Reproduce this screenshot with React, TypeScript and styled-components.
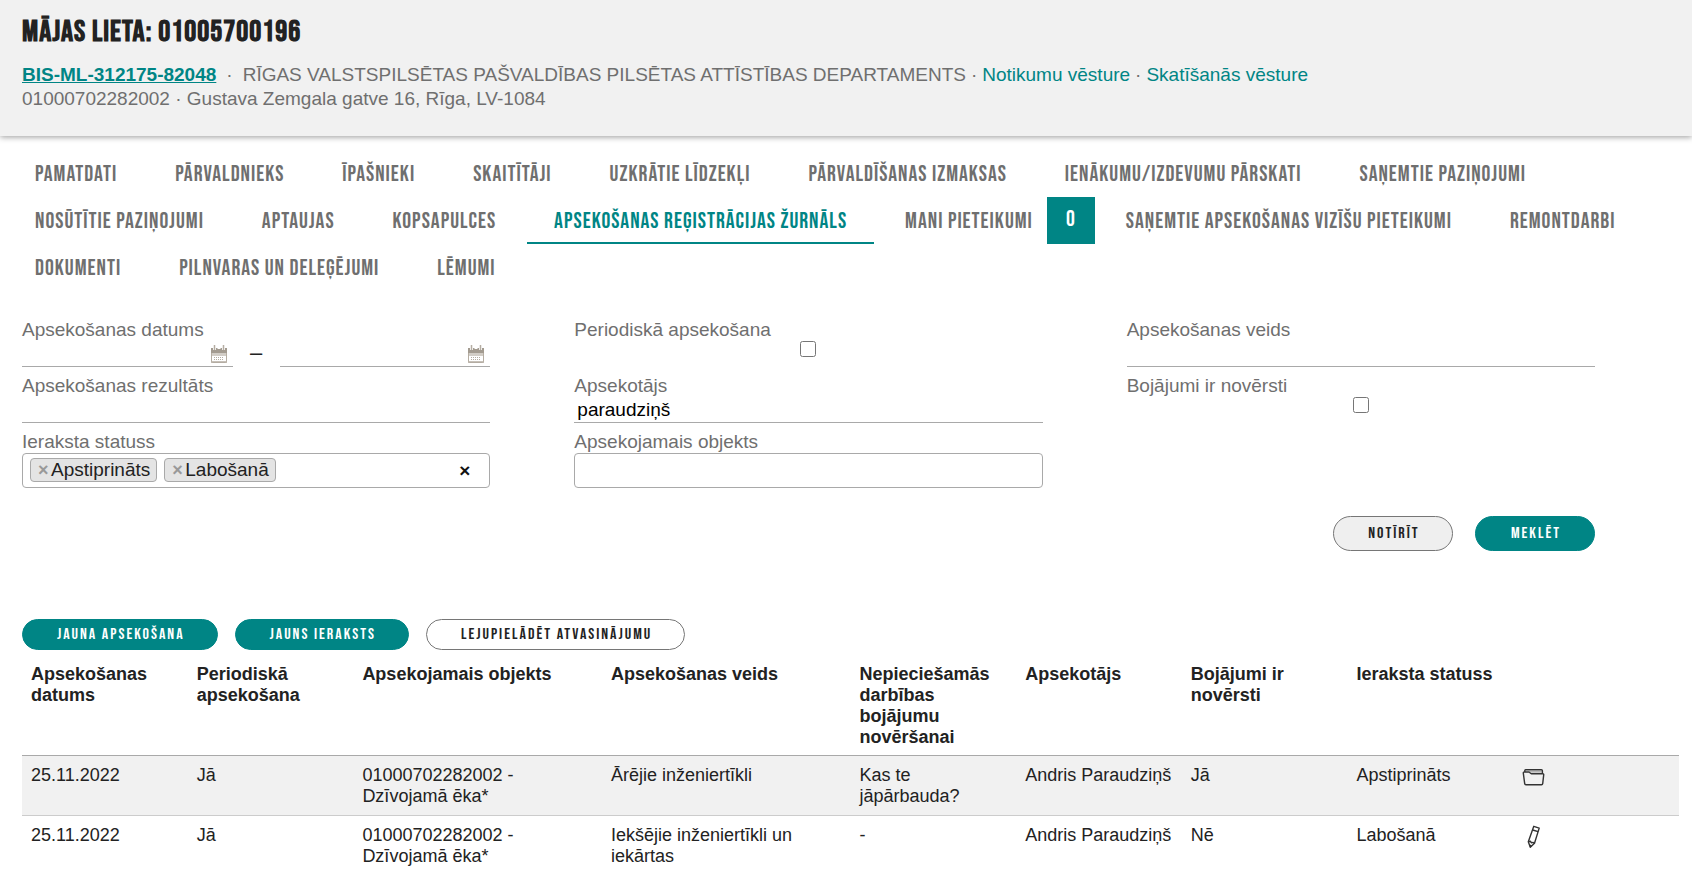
import React from "react";
import styled, { createGlobalStyle } from "styled-components";

const teal = "#008585";
const ink = "#222222";
const muted = "#6f6f6f";
const line = "#a9a9a9";
const condensed = '"Bebas Neue", "Open Sans Condensed", "Roboto Condensed", sans-serif';

const GlobalStyle = createGlobalStyle`
  *, *::before, *::after { box-sizing: border-box; }
  body {
    margin: 0;
    background: #fff;
    color: ${ink};
    font-family: "Liberation Sans", Arial, sans-serif;
    font-size: 18px;
    line-height: 21px;
  }
  input, button { font: inherit; color: inherit; }
`;

const Header = styled.header`
  padding: 16px 22px 25px;
  background: #f1f1f1;
  box-shadow: 0 1px 6px rgba(0, 0, 0, 0.4);
  color: ${muted};
  font-size: 19px;
  line-height: 24px;
`;

const Title = styled.h1`
  margin: 0 0 15px;
  color: ${ink};
  font-family: ${condensed};
  font-size: 30px;
  letter-spacing: 1px;
  line-height: 32px;
  font-weight: 700;
`;

const Meta = styled.p`
  margin: 0;
`;

const Dot = styled.span<{ $wide?: boolean }>`
  margin: 0 ${(p) => (p.$wide ? "10px" : "5px")};
`;

const HeaderLink = styled.a<{ $strong?: boolean }>`
  color: ${teal};
  font-weight: ${(p) => (p.$strong ? 700 : 400)};
  text-decoration: ${(p) => (p.$strong ? "underline" : "none")};
`;

const Tabs = styled.nav`
  display: flex;
  flex-wrap: wrap;
  column-gap: 4px;
  padding: 14px 8px 0;
`;

const Tab = styled.a<{ $active?: boolean; $badged?: boolean }>`
  display: flex;
  align-items: center;
  height: 47px;
  padding: 4px ${(p) => (p.$badged ? "0" : "27px")} 0 27px;
  border-bottom: 2px solid ${(p) => (p.$active ? teal : "transparent")};
  color: ${(p) => (p.$active ? teal : muted)};
  font-family: ${condensed};
  font-size: 22px;
  letter-spacing: 1px;
  text-transform: uppercase;
  text-decoration: none;
  white-space: nowrap;
`;

const Badge = styled.span`
  display: flex;
  align-items: center;
  justify-content: center;
  width: 48px;
  height: 47px;
  margin: -4px 0 -2px 14px;
  padding-bottom: 2px;
  background: ${teal};
  color: #fff;
`;

const SearchForm = styled.form`
  display: grid;
  grid-template-columns: repeat(3, minmax(0, 1fr));
  column-gap: 84px;
  padding: 26px 97px 0 22px;
`;

const Field = styled.div`
  display: flex;
  flex-direction: column;
  min-height: 56px;
`;

const Label = styled.label`
  height: 24px;
  color: ${muted};
  font-size: 19px;
  line-height: 26px;
`;

const LineInput = styled.input`
  width: 100%;
  height: 26px;
  padding: 0 3px;
  border: 0;
  border-bottom: 1px solid ${line};
  border-radius: 0;
  background: transparent;
  color: #000;
  font-size: 19px;
  outline: none;
`;

const CheckBox = styled.input`
  width: 16px;
  height: 16px;
  margin: 0;
  align-self: center;
`;

const DateRange = styled.div`
  display: grid;
  grid-template-columns: minmax(0, 1fr) 47px minmax(0, 1fr);
`;

const DateBox = styled.div`
  display: flex;
  align-items: center;
  padding-right: 6px;
  border-bottom: 1px solid ${line};
`;

const DateInput = styled.input`
  flex: 1;
  min-width: 0;
  height: 25px;
  padding: 0 3px;
  border: 0;
  background: transparent;
  outline: none;
`;

const IconButton = styled.button`
  display: flex;
  padding: 0;
  border: 0;
  background: none;
`;

const Dash = styled.span`
  font-size: 22px;
  line-height: 24px;
  text-align: center;
`;

const MultiBox = styled.div`
  display: flex;
  align-items: center;
  height: 35px;
  padding: 0 17px 0 7px;
  border: 1px solid ${line};
  border-radius: 4px;
`;

const Tag = styled.span`
  display: flex;
  align-items: center;
  height: 24px;
  margin: 0 7px 2px 0;
  padding: 0 6px 0 7px;
  border: 1px solid ${line};
  border-radius: 4px;
  background: #e4e4e4;
  font-size: 19px;
`;

const RemoveButton = styled.button<{ $dark?: boolean }>`
  width: 13px;
  padding: 0;
  border: 0;
  background: none;
  color: ${(p) => (p.$dark ? "#111" : "#999")};
  font-size: ${(p) => (p.$dark ? "19px" : "18px")};
  font-weight: 700;
  line-height: 16px;
  text-align: left;
`;

const MultiInput = styled.input`
  flex: 1;
  min-width: 0;
  border: 0;
  background: transparent;
  outline: none;
`;

const Submit = styled.div`
  grid-column: 1 / -1;
  display: flex;
  justify-content: flex-end;
  gap: 22px;
  padding-top: 28px;
`;

type Tone = "teal" | "grey" | "white";

const Pill = styled.button<{ $tone: Tone; $tall?: boolean }>`
  min-width: 120px;
  height: ${(p) => (p.$tall ? "35px" : "31px")};
  padding: 0 32px 0 34px;
  border: 1px solid ${(p) => (p.$tone === "teal" ? teal : "#767676")};
  border-radius: 18px;
  background: ${(p) => (p.$tone === "teal" ? teal : p.$tone === "grey" ? "#efefef" : "#fff")};
  color: ${(p) => (p.$tone === "teal" ? "#fff" : ink)};
  font-family: ${condensed};
  font-size: 16px;
  letter-spacing: 2px;
  text-transform: uppercase;
  white-space: nowrap;
`;

const Actions = styled.div`
  display: flex;
  gap: 17px;
  padding: 68px 22px 4px;
`;

const TableWrap = styled.div`
  padding: 0 13px 0 22px;
`;

const Table = styled.table`
  width: 100%;
  table-layout: fixed;
  border-collapse: collapse;
`;

const Column = styled.col<{ $share: number }>`
  width: ${(p) => p.$share}%;
`;

const HeadCell = styled.th`
  padding: 10px 9px 7px;
  border-bottom: 1px solid ${line};
  text-align: left;
  vertical-align: top;
`;

const Row = styled.tr`
  &:nth-child(odd) { background: #f1f1f1; }
  &:not(:last-child) td { border-bottom: 1px solid #cccccc; }
`;

const Cell = styled.td`
  padding: 9px 9px 8px;
  vertical-align: top;
`;

const tabs = [
  "Pamatdati", "Pārvaldnieks", "Īpašnieki", "Skaitītāji", "Uzkrātie līdzekļi",
  "Pārvaldīšanas izmaksas", "Ienākumu/izdevumu pārskati", "Saņemtie paziņojumi",
  "Nosūtītie paziņojumi", "Aptaujas", "Kopsapulces", "Apsekošanas reģistrācijas žurnāls",
  "Mani pieteikumi", "Saņemtie apsekošanas vizīšu pieteikumi", "Remontdarbi",
  "Dokumenti", "Pilnvaras un deleģējumi", "Lēmumi",
];

const columns = [
  { title: "Apsekošanas datums", share: 10 },
  { title: "Periodiskā apsekošana", share: 10 },
  { title: "Apsekojamais objekts", share: 15 },
  { title: "Apsekošanas veids", share: 15 },
  { title: "Nepieciešamās darbības bojājumu novēršanai", share: 10 },
  { title: "Apsekotājs", share: 10 },
  { title: "Bojājumi ir novērsti", share: 10 },
  { title: "Ieraksta statuss", share: 10 },
];

const rows = [
  {
    cells: ["25.11.2022", "Jā", "01000702282002 - Dzīvojamā ēka*", "Ārējie inženiertīkli", "Kas te jāpārbauda?", "Andris Paraudziņš", "Jā", "Apstiprināts"],
    action: "open",
  },
  {
    cells: ["25.11.2022", "Jā", "01000702282002 - Dzīvojamā ēka*", "Iekšējie inženiertīkli un iekārtas", "-", "Andris Paraudziņš", "Nē", "Labošanā"],
    action: "edit",
  },
];

const CalendarIcon = () => (
  <svg width="16" height="18" viewBox="0 0 16 18" aria-hidden="true">
    <rect x="0.5" y="3.5" width="15" height="14" rx="1" fill="#fff" stroke="#b5ada2" />
    <rect x="0" y="3" width="16" height="5" fill="#a39b90" />
    <rect x="1" y="8" width="14" height="3" fill="#d2cdc6" />
    <path d="M3.5 0v5M8 1v3M12.5 0v5" stroke="#fff" strokeWidth="3" />
    <path d="M3.5 0v5M12.5 0v5" stroke="#b5ada2" strokeWidth="1.5" />
    <path d="M3 12.5h10M3 14.5h10" stroke="#b5ada2" strokeDasharray="1 1" />
    <path d="M0 17h16" stroke="#b5ada2" strokeWidth="1.5" />
  </svg>
);

const FolderIcon = () => (
  <svg width="24" height="22" viewBox="0 0 24 22" fill="none" stroke="#333" strokeWidth="1.4" strokeLinejoin="round" aria-hidden="true">
    <path d="M1.3 8.2C1.2 7.4 1.7 7 2.4 7h4.4c1.3 0 1.3 1.7 2.6 1.7h11.3c.7 0 1.1.4 1 1.1l-1 8.9c-.1.7-.5 1-1.2 1H3.9c-.7 0-1.100-.3-1.200-1z" />
    <path d="M2.800 7V5.600c0-.5.3-.8.8-.8h15.800c.6 0 1 .3 1 .9v2.900" />
    <path d="M7.5 6.900h12.500" stroke="#777" strokeWidth="0.8" />
  </svg>
);

const PencilIcon = () => (
  <svg width="22" height="24" viewBox="0 0 22 24" fill="none" stroke="#333" strokeWidth="1.4" strokeLinejoin="round" aria-hidden="true">
    <path d="M11.800 1.300l5.400 1.800-4.700 15.200-4.200 4-2-5.600z" />
    <path d="M10.700 5l5.400 1.700M6.300 16.700l2-.4 1.200 1.500 1.400-.4 1.600.9" />
    <path d="M7.600 20.400l1.900.7" strokeWidth="1.800" />
  </svg>
);

const TextField = ({ id, label, value }: { id: string; label: string; value?: string }) => (
  <Field>
    <Label htmlFor={id}>{label}</Label>
    <LineInput id={id} type="text" defaultValue={value} />
  </Field>
);

const CheckField = ({ id, label }: { id: string; label: string }) => (
  <Field>
    <Label htmlFor={id}>{label}</Label>
    <CheckBox id={id} type="checkbox" />
  </Field>
);

export default function App() {
  return (
    <>
      <GlobalStyle />
      <Header>
        <Title>MĀJAS LIETA: 01005700196</Title>
        <Meta>
          <HeaderLink href="#case" $strong>BIS-ML-312175-82048</HeaderLink>
          <Dot $wide>·</Dot>
          RĪGAS VALSTSPILSĒTAS PAŠVALDĪBAS PILSĒTAS ATTĪSTĪBAS DEPARTAMENTS
          <Dot>·</Dot>
          <HeaderLink href="#events">Notikumu vēsture</HeaderLink>
          <Dot>·</Dot>
          <HeaderLink href="#views">Skatīšanās vēsture</HeaderLink>
        </Meta>
        <Meta>01000702282002 · Gustava Zemgala gatve 16, Rīga, LV-1084</Meta>
      </Header>

      <Tabs>
        {tabs.map((name, i) => (
          <Tab key={name} href={`#tab-${i}`} $active={i === 11} $badged={i === 12}>
            {name}
            {i === 12 && <Badge>0</Badge>}
          </Tab>
        ))}
      </Tabs>

      <main>
        <SearchForm onSubmit={(e) => e.preventDefault()}>
          <Field>
            <Label htmlFor="date-from">Apsekošanas datums</Label>
            <DateRange>
              <DateBox>
                <DateInput id="date-from" type="text" />
                <IconButton type="button" aria-label="Datums no"><CalendarIcon /></IconButton>
              </DateBox>
              <Dash>–</Dash>
              <DateBox>
                <DateInput type="text" aria-label="Apsekošanas datums līdz" />
                <IconButton type="button" aria-label="Datums līdz"><CalendarIcon /></IconButton>
              </DateBox>
            </DateRange>
          </Field>
          <CheckField id="periodic" label="Periodiskā apsekošana" />
          <TextField id="kind" label="Apsekošanas veids" />
          <TextField id="result" label="Apsekošanas rezultāts" />
          <TextField id="inspector" label="Apsekotājs" value="paraudziņš" />
          <CheckField id="fixed" label="Bojājumi ir novērsti" />
          <Field>
            <Label htmlFor="status">Ieraksta statuss</Label>
            <MultiBox>
              {["Apstiprināts", "Labošanā"].map((tag) => (
                <Tag key={tag}>
                  <RemoveButton type="button" aria-label={`Noņemt ${tag}`}>×</RemoveButton>
                  {tag}
                </Tag>
              ))}
              <MultiInput id="status" type="text" />
              <RemoveButton type="button" aria-label="Noņemt visus" $dark>×</RemoveButton>
            </MultiBox>
          </Field>
          <Field>
            <Label htmlFor="object">Apsekojamais objekts</Label>
            <MultiBox><MultiInput id="object" type="text" /></MultiBox>
          </Field>
          <Submit>
            <Pill type="reset" $tone="grey" $tall>Notīrīt</Pill>
            <Pill type="submit" $tone="teal" $tall>Meklēt</Pill>
          </Submit>
        </SearchForm>

        <Actions>
          <Pill type="button" $tone="teal">Jauna apsekošana</Pill>
          <Pill type="button" $tone="teal">Jauns ieraksts</Pill>
          <Pill type="button" $tone="white">Lejupielādēt atvasinājumu</Pill>
        </Actions>

        <TableWrap>
          <Table>
            <colgroup>
              {columns.map((c) => <Column key={c.title} $share={c.share} />)}
              <Column $share={10} />
            </colgroup>
            <thead>
              <tr>
                {columns.map((c) => <HeadCell key={c.title} scope="col">{c.title}</HeadCell>)}
                <HeadCell scope="col" aria-label="Darbības" />
              </tr>
            </thead>
            <tbody>
              {rows.map((row) => (
                <Row key={row.action}>
                  {row.cells.map((text, i) => <Cell key={i}>{text}</Cell>)}
                  <Cell>
                    <IconButton type="button" aria-label={row.action === "open" ? "Atvērt" : "Labot"}>
                      {row.action === "open" ? <FolderIcon /> : <PencilIcon />}
                    </IconButton>
                  </Cell>
                </Row>
              ))}
            </tbody>
          </Table>
        </TableWrap>
      </main>
    </>
  );
}
